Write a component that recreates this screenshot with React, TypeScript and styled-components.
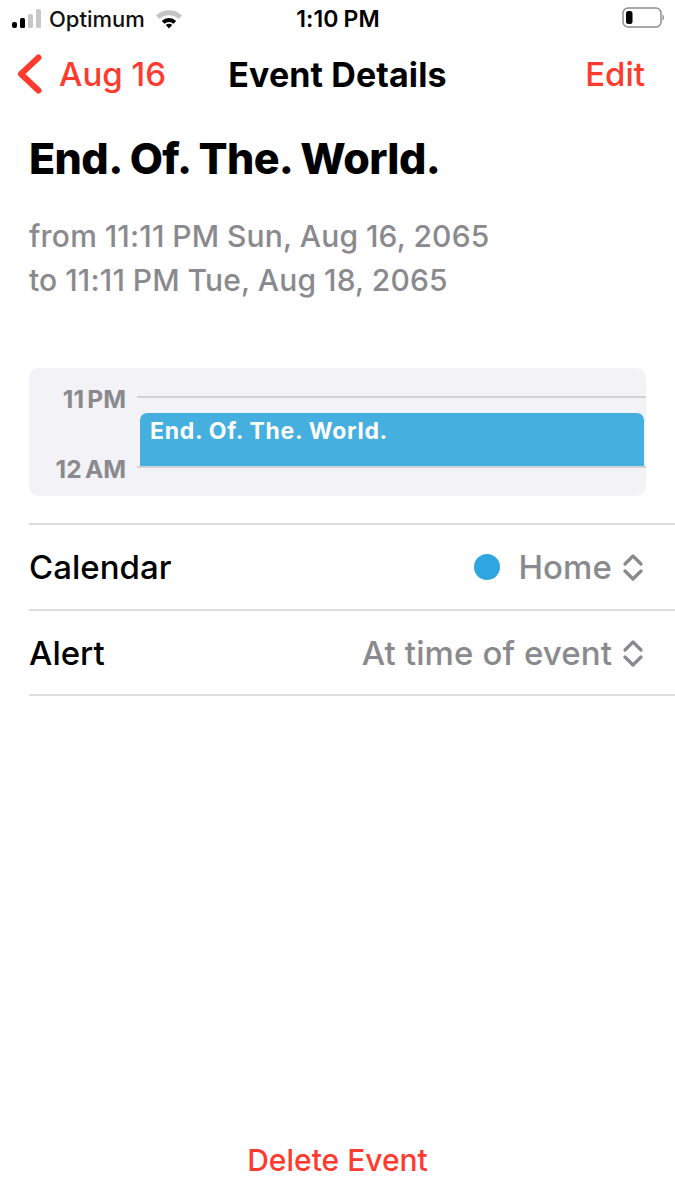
import React from "react";
import styled, { createGlobalStyle } from "styled-components";

const Global = createGlobalStyle`
  html, body { margin: 0; padding: 0; background: #fff; }
  body { font-family: Inter, "Liberation Sans", sans-serif; -webkit-font-smoothing: antialiased; }
`;

const Screen = styled.div`
  width: 675px;
  height: 1200px;
  display: flex;
  flex-direction: column;
  overflow: hidden;
  background: #fff;
`;

const StatusBar = styled.div`
  height: 38px;
  display: grid;
  grid-template-columns: 1fr auto 1fr;
  align-items: center;
  padding: 0 11px 0 12px;
`;
const StatusLeft = styled.div`
  display: flex;
  align-items: center;
  gap: 7px;
`;
const Carrier = styled.span`
  font-size: 22px;
  font-weight: 500;
  color: #111;
`;
const Clock = styled.span`
  font-size: 23px;
  font-weight: 600;
  color: #000;
  word-spacing: -1px;
  letter-spacing: 0.1px;
`;
const StatusRight = styled.div`
  display: flex;
  justify-content: flex-end;
  padding-bottom: 2px;
`;

const NavBar = styled.div`
  height: 72px;
  padding: 0 30px 2px;
  display: grid;
  grid-template-columns: 1fr auto 1fr;
  align-items: center;
`;
const Back = styled.div`
  display: flex;
  align-items: center;
  gap: 17px;
  margin-left: -13px;
  color: #ff3b30;
  font-size: 33px;
  font-weight: 500;
`;
const NavTitle = styled.div`
  font-size: 34px;
  font-weight: 700;
  letter-spacing: 0.1px;
  color: #000;
`;
const NavAction = styled.div`
  font-size: 33px;
  font-weight: 500;
  color: #ff3b30;
  text-align: right;
`;

const Content = styled.div`
  flex: 1;
  display: flex;
  flex-direction: column;
  padding-left: 29px;
`;
const Title = styled.h1`
  margin: 20px 0 0;
  font-size: 43px;
  line-height: 52px;
  font-weight: 800;
  letter-spacing: -0.6px;
  color: #000;
`;
const When = styled.div`
  margin-top: 30px;
  font-size: 30px;
  line-height: 44px;
  font-weight: 500;
  color: #8a8a8e;
  letter-spacing: 0.2px;
  word-spacing: -0.5px;
`;

const Preview = styled.div`
  margin: 66px 29px 0 0;
  height: 128px;
  background: #f2f2f7;
  border-radius: 10px;
  display: grid;
  grid-template-columns: 108px 1fr;
  grid-template-rows: 29px 70px 29px;
`;
const HourLabel = styled.div<{ $row: number }>`
  grid-column: 1;
  grid-row: ${(p) => p.$row};
  align-self: end;
  text-align: right;
  font-size: 24.5px;
  font-weight: 700;
  line-height: 24px;
  color: #8a8a8e;
  transform: translateY(14px);
  padding-right: 11px;
  white-space: nowrap;
  word-spacing: -2.5px;
`;
const HourTrack = styled.div`
  grid-column: 2;
  grid-row: 2;
  border-top: 2px solid #d1d1d6;
  border-bottom: 2px solid #d1d1d6;
  margin-top: -1px;
  margin-bottom: -1px;
  padding: 15px 2px 0 3px;
  display: flex;
`;
const EventBlock = styled.div`
  flex: 1;
  background: #45b0df;
  border-radius: 7px 7px 0 0;
  color: #fff;
  font-size: 23px;
  font-weight: 700;
  line-height: 24px;
  padding: 6px 10px 0;
  letter-spacing: 0.7px;
`;

const Rows = styled.div`
  margin-top: 27px;
  border-top: 2px solid #dcdcdf;
`;
const Row = styled.div`
  height: 82.5px;
  padding: 1px 31px 0 0;
  border-bottom: 2px solid #dcdcdf;
  display: flex;
  align-items: center;
  justify-content: space-between;
`;
const RowLabel = styled.div`
  font-size: 33px;
  font-weight: 500;
  color: #000;
`;
const RowValue = styled.div`
  display: flex;
  align-items: center;
  font-size: 33px;
  font-weight: 500;
  letter-spacing: 0.1px;
  color: #8a8a8e;
`;
const Dot = styled.span`
  width: 26px;
  height: 26px;
  border-radius: 50%;
  background: #2fa6e0;
  margin-right: 18px;
`;
const Chevrons = styled.svg`
  width: 22px;
  height: 28px;
  margin-left: 10px;
`;

const Footer = styled.div`
  height: 60px;
  display: flex;
  align-items: flex-start;
  justify-content: center;
  color: #ff3b30;
  font-size: 30px;
  font-weight: 500;
  line-height: 40px;
  flex-shrink: 0;
`;

const Updown = () => (
  <Chevrons viewBox="0 0 22 28" fill="none" stroke="#8a8a8e" strokeWidth="3.2" strokeLinecap="round" strokeLinejoin="round">
    <path d="M3 11 L11 3 L19 11" />
    <path d="M3 18 L11 26 L19 18" />
  </Chevrons>
);

export default function App() {
  return (
    <Screen>
      <Global />
      <StatusBar>
        <StatusLeft>
          <svg width="30" height="20" viewBox="0 0 30 20">
            <rect x="0" y="13" width="5" height="6" rx="2" fill="#000" />
            <rect x="8" y="9" width="5" height="10" rx="1.5" fill="#000" />
            <rect x="16" y="5" width="5" height="14" rx="1.5" fill="#c8c8c8" />
            <rect x="24" y="0" width="5" height="19" rx="1.5" fill="#c8c8c8" />
          </svg>
          <Carrier>Optimum</Carrier>
          <svg width="28" height="20" viewBox="0 0 28 20" style={{ marginLeft: 3 }}>
            <path d="M1 6.5 A19 19 0 0 1 27 6.5 L23.5 10 A14 14 0 0 0 4.5 10 Z" fill="#c4c4c4" />
            <path d="M6.8 12 A10 10 0 0 1 21.2 12 L18.5 14.8 A6.5 6.5 0 0 0 9.5 14.8 Z" fill="#000" />
            <path d="M10.8 16 A4.5 4.5 0 0 1 17.2 16 L14 19.5 Z" fill="#000" />
          </svg>
        </StatusLeft>
        <Clock>1:10 PM</Clock>
        <StatusRight>
          <svg width="42" height="22" viewBox="0 0 42 22">
            <rect x="1" y="1" width="38" height="19" rx="5" fill="none" stroke="#8e8e8e" strokeWidth="1.5" />
            <rect x="4" y="4" width="6.5" height="13" rx="2.5" fill="#000" />
            <path d="M40.5 7.5 C42.5 8 42.5 13 40.5 13.5 Z" fill="#8e8e8e" />
          </svg>
        </StatusRight>
      </StatusBar>
      <NavBar>
        <Back>
          <svg width="25" height="40" viewBox="0 0 25 40" fill="none" stroke="#ff3b30" strokeWidth="6" strokeLinecap="round" strokeLinejoin="round">
            <path d="M21.5 3.5 L4 20 L21.5 36.5" />
          </svg>
          <span>Aug 16</span>
        </Back>
        <NavTitle>Event Details</NavTitle>
        <NavAction>Edit</NavAction>
      </NavBar>
      <Content>
        <Title>End. Of. The. World.</Title>
        <When>
          from 11:11 PM Sun, Aug 16, 2065
          <br />
          to 11:11 PM Tue, Aug 18, 2065
        </When>
        <Preview>
          <HourLabel $row={1}>11 PM</HourLabel>
          <HourTrack>
            <EventBlock>End. Of. The. World.</EventBlock>
          </HourTrack>
          <HourLabel $row={2}>12 AM</HourLabel>
        </Preview>
        <Rows>
          <Row>
            <RowLabel>Calendar</RowLabel>
            <RowValue>
              <Dot />
              Home
              <Updown />
            </RowValue>
          </Row>
          <Row>
            <RowLabel>Alert</RowLabel>
            <RowValue>
              At time of event
              <Updown />
            </RowValue>
          </Row>
        </Rows>
      </Content>
      <Footer>Delete Event</Footer>
    </Screen>
  );
}
